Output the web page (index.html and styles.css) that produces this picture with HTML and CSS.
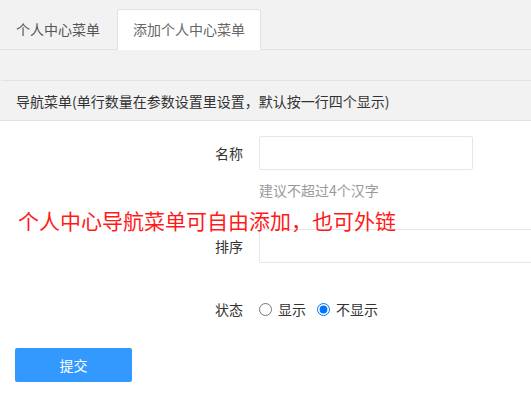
FILE: index.html
```html
<!DOCTYPE html>
<html lang="zh">
<head>
<meta charset="utf-8">
<link rel="stylesheet" href="styles.css">
</head>
<body>
<div class="top">
  <ul class="tabs">
    <li class="tab">个人中心菜单</li>
    <li class="tab active">添加个人中心菜单</li>
  </ul>
</div>
<div class="panel-head">导航菜单(单行数量在参数设置里设置，默认按一行四个显示)</div>
<form class="form">
  <div class="row">
    <label class="label">名称</label>
    <input class="input" type="text">
  </div>
  <div class="hint">建议不超过4个汉字</div>
  <div class="row row2">
    <label class="label">排序</label>
    <input class="input wide" type="text">
  </div>
  <div class="row row3">
    <label class="label">状态</label>
    <label class="radio"><input type="radio" name="s"> 显示</label>
    <label class="radio"><input type="radio" name="s" checked> 不显示</label>
  </div>
  <button class="btn" type="button">提交</button>
  <div class="note">个人中心导航菜单可自由添加，也可外链</div>
</form>
</body>
</html>
```
FILE: styles.css
```css
html, body {
  margin: 0;
  padding: 0;
  background: #fff;
  overflow: hidden;
  width: 531px;
  height: 396px;
  font-family: "Noto Sans CJK SC", "Noto Sans", sans-serif;
  font-size: 14px;
  color: #333;
}
.top {
  background: #f2f2f2;
  height: 80px;
  padding-top: 9px;
  box-sizing: border-box;
}
.tabs {
  list-style: none;
  margin: 0;
  padding: 0;
  height: 41px;
  box-sizing: border-box;
  border-bottom: 1px solid #e2e2e2;
  display: flex;
  gap: 2px;
}
.tab {
  height: 40px;
  line-height: 40px;
  padding: 0 15px 0 16px;
  color: #555;
  box-sizing: border-box;
}
.tab.active {
  background: #fff;
  border: 1px solid #e2e2e2;
  border-bottom: none;
  border-radius: 3px 3px 0 0;
  height: 41px;
  margin-bottom: -1px;
  color: #666;
  padding: 0 15px;
  line-height: 39px;
}
.panel-head {
  background: #f2f2f2;
  border-top: 1px solid #e2e2e2;
  border-bottom: 1px solid #e2e2e2;
  border-radius: 2px 0 0 0;
  height: 39px;
  line-height: 40px;
  padding-left: 16px;
  color: #333;
}
.form {
  position: relative;
  padding-top: 15px;
}
.row {
  display: flex;
  align-items: center;
  height: 34px;
}
.label {
  flex-shrink: 0;
  width: 243px;
  text-align: right;
  padding-right: 16px;
  color: #333;
}
.input {
  flex-shrink: 0;
  width: 214px;
  height: 34px;
  box-sizing: border-box;
  border: 1px solid #e6e6e6;
  border-radius: 2px;
  outline: none;
  margin: 0;
}
.input.wide {
  width: 272px;
  border-right: none;
  border-radius: 2px 0 0 2px;
}
.hint {
  margin-top: 10px;
  padding-left: 259px;
  line-height: 20px;
  color: #999;
}
.row2 {
  margin-top: 29px;
}
.row3 {
  margin-top: 29px;
}
.radio {
  display: flex;
  align-items: center;
  margin-right: 11px;
  color: #333;
}
.radio input {
  margin: 0 6px 0 0;
  width: 13px;
  height: 13px;
}
.btn {
  display: block;
  margin: 22px 0 0 15px;
  width: 117px;
  height: 34px;
  border: none;
  border-radius: 2px;
  background: #3399ff;
  color: #fff;
  font-family: "Noto Sans CJK SC", sans-serif;
  font-size: 14px;
}
.note {
  position: absolute;
  left: 18px;
  top: 85px;
  font-size: 21px;
  line-height: 28px;
  color: #ff1a1a;
  white-space: nowrap;
}
```
